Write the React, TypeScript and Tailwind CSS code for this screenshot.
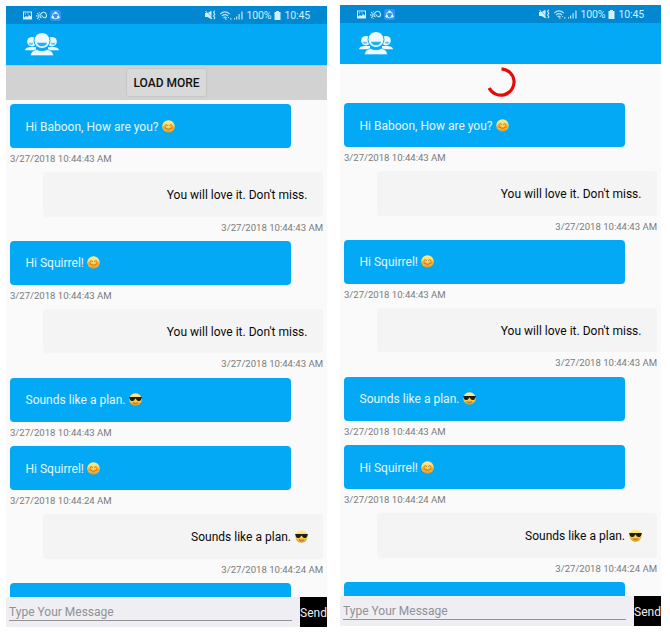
import React from "react";

type Mood = "smile" | "cool";
type Message = { text: string; time: string; mood?: Mood; mine?: boolean };

const messages: Message[] = [
  { text: "Hi Baboon, How are you?", time: "3/27/2018 10:44:43 AM", mood: "smile" },
  { text: "You will love it. Don't miss.", time: "3/27/2018 10:44:43 AM", mine: true },
  { text: "Hi Squirrel!", time: "3/27/2018 10:44:43 AM", mood: "smile" },
  { text: "You will love it. Don't miss.", time: "3/27/2018 10:44:43 AM", mine: true },
  { text: "Sounds like a plan.", time: "3/27/2018 10:44:43 AM", mood: "cool" },
  { text: "Hi Squirrel!", time: "3/27/2018 10:44:24 AM", mood: "smile" },
  { text: "Sounds like a plan.", time: "3/27/2018 10:44:24 AM", mood: "cool", mine: true },
];

function Emoji({ mood }: { mood: Mood }) {
  return (
    <svg className="ml-[3.5px] h-[13px] w-[13px] shrink-0" viewBox="0 0 26 26">
      <defs>
        <linearGradient id="face" x1="0" y1="0" x2="0" y2="1">
          <stop offset="0" stopColor="#fdec9a" />
          <stop offset="0.6" stopColor="#fbd04a" />
          <stop offset="1" stopColor="#d9902a" />
        </linearGradient>
      </defs>
      <circle cx="13" cy="13" r="12.500" fill="url(#face)" />
      {mood === "smile" ? (
        <g fill="none" stroke="#a0601c" strokeWidth="1.6" strokeLinecap="round">
          <circle cx="5.500" cy="15" r="3.500" fill="#f58a2a" stroke="none" opacity="0.7" />
          <circle cx="20.500" cy="15" r="3.500" fill="#f58a2a" stroke="none" opacity="0.7" />
          <path d="M6 10.500q2.500-2.500 5 0M15 10.500q2.500-2.500 5 0M7 16q6 5.500 12 0" />
        </g>
      ) : (
        <g>
          <path d="M0 8h26l-1 2.500c-1 4.500-3 5.500-6 5.500-3 0-4-2-5-4.500h-2c-1 2.500-2 4.500-5 4.500s-5-1-6-5.500z" fill="#1f1d18" />
          <path d="M8.500 20q4.500 2 9 0" fill="none" stroke="#a0601c" strokeWidth="1.600" strokeLinecap="round" />
        </g>
      )}
    </svg>
  );
}

function People() {
  return (
    <svg className="h-[23px] w-[34px]" viewBox="0 0 34 23" fill="#eefaff">
      <circle cx="7" cy="8.700" r="4.800" />
      <circle cx="27" cy="8.700" r="4.800" />
      <path d="M0 17.300c.3-2.100 2-2.900 5-3.300h6v3.300zM34 17.300c-.3-2.100-2-2.900-5-3.300h-6v3.300z" />
      <path d="M3.500 9.800h5c-.3 1.500-1.300 2.200-2.300 2.200S3.800 11.300 3.500 9.800zM25.500 9.800h5c-.3 1.500-1.300 2.200-2.300 2.200s-2.400-.7-2.700-2.200z" fill="#03a9f4" opacity=".6" />
      <circle cx="17" cy="7.500" r="8" stroke="#03a9f4" strokeWidth="1" />
      <path d="M12 9.700h10c-.6 2.600-2.700 3.600-5 3.600s-4.400-1-5-3.600z" fill="#1fb3f6" />
      <path d="M5.500 22.700c.4-4 2.300-5.400 6.500-6.200 2.500 1.700 7.500 1.700 10 0 4.200.8 6.100 2.200 6.500 6.200z" stroke="#03a9f4" strokeWidth=".7" />
    </svg>
  );
}

function StatusBar() {
  return (
    <div className="flex h-[18px] shrink-0 items-center bg-[#0288d1] pl-[17px] pr-[17px] text-[#d5effc]">
      <svg className="h-[9px] w-[9px]" viewBox="0 0 9 9">
        <path fill="#d5effc" d="M0 .500h9v8H0z" />
        <path fill="#0288d1" d="M1 1.500h7v4L6 4 4.500 6 3 5 1 6.500z" />
        <path fill="#d5effc" d="M2 2.500h1v1H2zM4.500 2.500h1v1h-1z" />
      </svg>
      <svg className="ml-[4px] h-[9px] w-[11px]" viewBox="0 0 11 9" fill="none" stroke="#c5e8fa" strokeWidth="1.100">
        <path d="M5.500 6.800C3.400 6.500 3.400 3.300 5.200 2.800 6 .8 9.800 .7 10.300 3.300c.6 2.200-.3 3.500-1.800 3.500-1.500 0-2-1.500-3-2.500" />
        <path d="M3 3.500C1.600 4 1.700 6.200 3 6.900M0 4.900h1M1.100 2.200l.8.700M1.100 7.800l.8-.7M3.300 1.200v1M3.300 8.800V8" />
      </svg>
      <svg className="ml-[3px] h-[11px] w-[11px]" viewBox="0 0 11 11">
        <rect width="11" height="11" rx="2.500" fill="#2b95f5" />
        <circle cx="5.500" cy="5.800" r="3" fill="none" stroke="#d8f1ff" strokeWidth="1" />
        <circle cx="5.500" cy="2.700" r="1.300" fill="#e8f7ff" />
        <circle cx="2.700" cy="7.200" r="1.300" fill="#e8f7ff" />
        <circle cx="8.300" cy="7.200" r="1.300" fill="#e8f7ff" />
      </svg>
      <svg className="ml-auto h-[10px] w-[11px]" viewBox="0 0 11 10">
        <path fill="#d5effc" d="M0 3h2.500L6.500 .8v8.400L2.500 7H0z" />
        <path fill="none" stroke="#0288d1" strokeWidth=".5" d="M1.500 .8l6 7.500" />
        <path fill="none" stroke="#d5effc" strokeWidth="1" d="M.5 1l6.500 8" />
        <path fill="none" stroke="#d5effc" strokeWidth="1.100" d="M9.800 .8L8.600 2.500l1.200 1.700L8.600 6l1.200 1.700L8.800 9.200" />
      </svg>
      <svg className="ml-[4px] h-[9px] w-[12px]" viewBox="0 0 12 9" fill="none" stroke="#b9e3f8" strokeWidth="1.200">
        <path d="M.3 3Q5 -1.200 9.700 3M2 5q3-2.600 6 0M3.500 6.700q1.500-1.200 3 0" />
        <path d="M5 7.500l1.500 1M8 6.500h1M10 7.800h1.500" />
      </svg>
      <svg className="ml-[2px] h-[9px] w-[9px]" viewBox="0 0 9 9" fill="#b9e3f8">
        <path d="M0 7h1v1.500H0zM2 5.500h1.200v3H2zM4.500 3h1.200v5.500H4.500zM7.300 .5h1.300v8H7.300z" />
      </svg>
      <span className="ml-[4px] w-[25px] pt-px text-[10.500px] leading-[17px] tracking-[-0.120px] whitespace-nowrap">
        100%
      </span>
      <svg className="ml-[2.500px] h-[9px] w-[7px]" viewBox="0 0 7 9" fill="#d5effc">
        <path d="M2 0h3v1h1.500v8h-6V1H2z" />
      </svg>
      <span className="ml-[3.500px] w-[25.500px] pt-px text-[10.500px] leading-[17px] tracking-[-0.120px] whitespace-nowrap">
        10:45
      </span>
    </div>
  );
}

function MessageRow({ text, time, mood, mine }: Message) {
  return (
    <div className={"flex h-[68.400px] shrink-0 flex-col px-1 " + (mine ? "items-end" : "items-start")}>
      <div
        className={
          "flex h-[44.300px] w-[280.500px] shrink-0 items-center rounded-[4px] px-[15.500px] text-[12px] whitespace-nowrap " +
          (mine ? "justify-end bg-[#f4f4f4] text-[#0a0a0a]" : "bg-[#03a9f4] text-[#e4f6fe]")
        }
      >
        <span className="pt-px tracking-[0.010px]">{text}</span>
        {mood && <Emoji mood={mood} />}
      </div>
      <div className="mt-[4px] text-[9.600px] leading-[13px] tracking-[-0.020px] whitespace-nowrap text-[#7b7b7b]">
        {time}
      </div>
    </div>
  );
}

function Phone({ loading = false }: { loading?: boolean }) {
  return (
    <div className="flex h-[621px] w-[321px] shrink-0 flex-col overflow-hidden bg-[#fafafa]">
      <StatusBar />
      <div className="flex h-[41px] shrink-0 items-start bg-[#03a9f4] pt-[9px] pl-[19px]">
        <People />
      </div>
      {loading ? (
        <div className="flex h-[35px] shrink-0 justify-center pt-[2.500px]">
          <svg className="h-[30px] w-[30px]" viewBox="0 0 30 30" fill="none" stroke="#e50b0b" strokeWidth="3.200">
            <path d="M15.500 1.800A13.200 13.200 0 1 1 3.100 21" />
          </svg>
        </div>
      ) : (
        <div className="flex h-[35px] shrink-0 items-start justify-center border-t border-[#bfc8cc] bg-[#d2d2d2] pt-[3px]">
          <button className="h-[27px] w-[79px] rounded-[2px] bg-[#d8dada] text-[12px] font-medium whitespace-nowrap text-[#111] shadow-[0_0_2px_#aaa]">
            LOAD MORE
          </button>
        </div>
      )}
      <div className="flex min-h-0 flex-1 flex-col overflow-hidden pt-[4px]">
        {messages.map((message, i) => (
          <MessageRow key={i} {...message} />
        ))}
        <div className="ml-1 h-[44px] w-[280.500px] shrink-0 rounded-[4px] bg-[#03a9f4]" />
      </div>
      <div className="flex h-[30px] shrink-0 bg-[#eeeef3]">
        <div className="mt-[4px] mr-[8px] ml-[3px] h-[20px] flex-1 border-b border-[#929297] text-[12px] leading-[22px] whitespace-nowrap text-[#919196]">
          Type Your Message
        </div>
        <button className="flex w-[27px] items-center justify-center bg-black pt-px text-[12px] whitespace-nowrap text-[#eee]">
          Send
        </button>
      </div>
    </div>
  );
}

export default function App() {
  return (
    <main className="flex h-[632px] w-[670px] items-start gap-[13px] overflow-hidden bg-white pt-[5px] pl-[6px] font-['Roboto',sans-serif]">
      <div className="pt-px">
        <Phone />
      </div>
      <Phone loading />
    </main>
  );
}
